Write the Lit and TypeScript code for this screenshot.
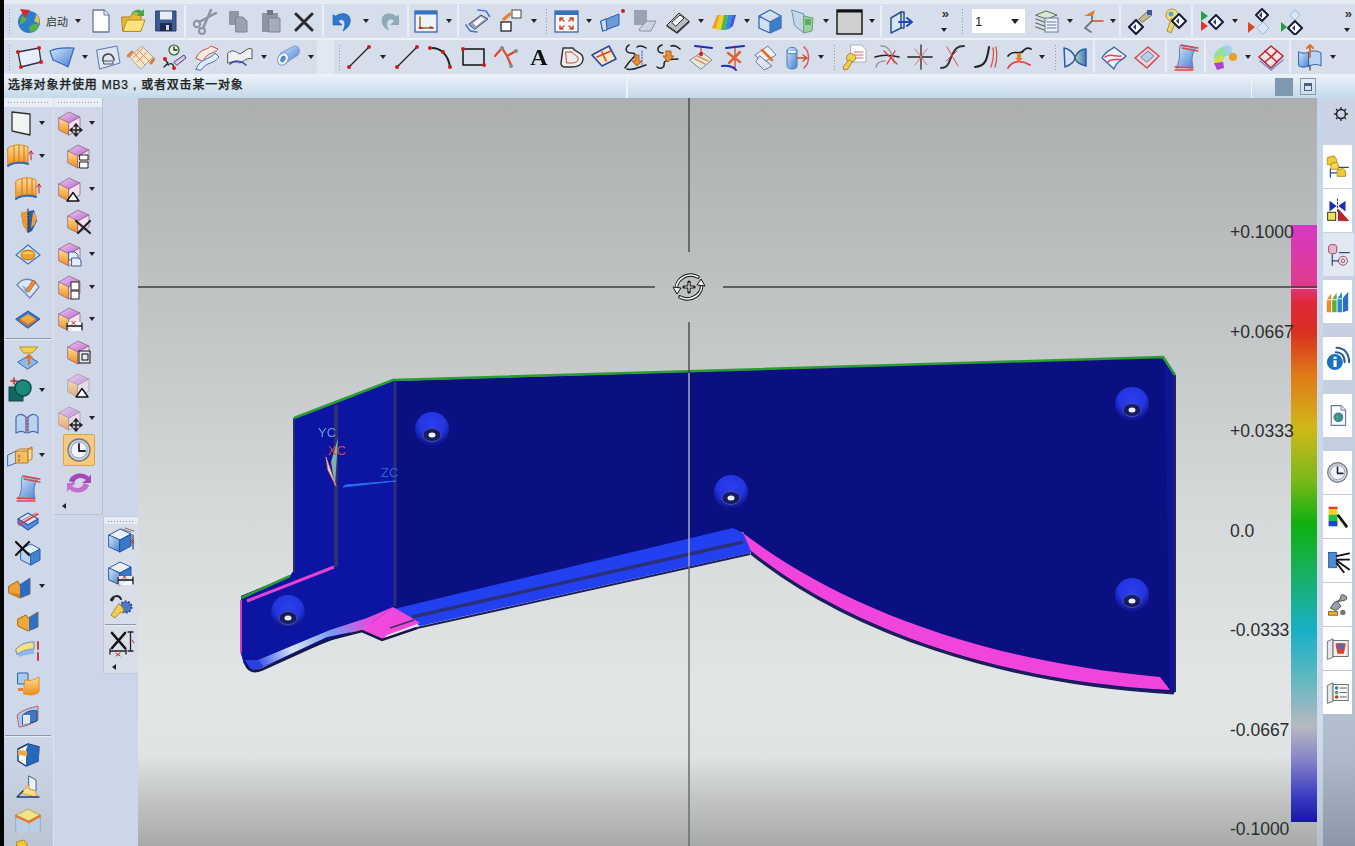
import { LitElement, html, css, svg } from 'lit';
import { customElement } from 'lit/decorators.js';

// cube shapes shared by the feature toolbars
const pcube = (o = 1) => svg`<g opacity=${o} stroke="#8a5a7a" stroke-width=".7">
  <path d="M3 9 13 3 24 8 13 14Z" fill="url(#pu)"/><path d="M3 9 13 14V26L3 21Z" fill="url(#or)"/>
  <path d="M13 14 24 8V20L13 26Z" fill="#f4e0f0"/></g>`;
const bcube = svg`<g stroke="#1c4c98" stroke-width=".9">
  <path d="M2 9 13 3 24 8 13 14Z" fill="#eaf2fc"/><path d="M2 9 13 14V26L2 21Z" fill="url(#bl)"/>
  <path d="M13 14 24 8V20L13 26Z" fill="#3a78c8"/></g>`;
const move = svg`<path d="M20 15V27M14 21H26M20 15 18 17.5M20 15 22 17.5M20 27 18 24.5M20 27 22 24.5M14 21 16.5 19M14 21 16.5 23M26 21 23.5 19M26 21 23.5 23" stroke="#222" stroke-width="1.500"/>`;
const tri = svg`<path d="M17 17.5 23 26H11Z" fill="#fff" stroke="#111" stroke-width="1.400"/>`;
const dim = svg`<rect x="10" y="17" width="17" height="9" fill="#fff" opacity=".85"/><path d="M11 21H26M11 18V25M26 18V25" stroke="#111" stroke-width="1.300"/><path d="M16 16.5 19 19.5M19 16.5 16 19.5" stroke="#b02020"/>`;
const dia = svg`<path d="M3 20 10 13 17 20 10 27Z" fill="#fff" stroke="#141c3c" stroke-width="2.200"/><path d="M10 17 7 20 10 23Z" fill="#2c3c6c"/>`;
const page = (f = '#fff') => svg`<path d="M7 3H18L23 8V25H7Z" fill=${f} stroke="#6d74a8" stroke-width="1.300"/><path d="M18 3V8H23" fill="#e8ecf6" stroke="#6d74a8"/>`;
const redDot = (x: number, y: number) => svg`<circle cx=${x} cy=${y} r="2" fill="#d01c1c"/>`;

const ICONS: Record<string, unknown> = {
  logo: svg`<circle cx="14" cy="15" r="11" fill="#2e7ccc"/><path d="M6 10c4-2 6 0 5 3s-4 3-6 5M15 19c4-3 8-2 9-1-1 4-4 7-8 7-2-2-3-4-1-6Z" fill="#58b048"/><path d="M21 7c3 3 4 6 3 10-2-2-3-2-5-3 1-2 2-4 2-7Z" fill="#f0c030"/><path d="M5 2 15 3 10 11Z" fill="#d82828"/>`,
  new: svg`${page()}`,
  open: svg`<path d="M3 10H11L13 7H22V24H4Z" fill="#e8b830" stroke="#a88018"/><path d="M4 24 8 13H26L22 24Z" fill="#fbe27c" stroke="#b08c20"/><path d="M12 7C15 2 20 2 23 4L25 2V9H18L20 7C18 5 15 5 12 7Z" fill="#4ca83c"/>`,
  save: svg`<path d="M4 4H24V24H4Z" fill="#3d5a96" stroke="#28406e"/><rect x="8" y="4.500" width="12" height="8" fill="#e8eef8"/><rect x="8" y="16" width="12" height="8" fill="#1e2c4c"/><rect x="14" y="18" width="3" height="5" fill="#cfd8e8"/>`,
  cut: svg`<circle cx="6" cy="17" r="3.200" stroke="#8b93a5" stroke-width="2" fill="none"/><circle cx="11" cy="24" r="3" stroke="#8b93a5" stroke-width="2" fill="none"/><path d="M8 15 25 6M12 21 20 3" stroke="#8b93a5" stroke-width="2.500"/>`,
  copy: svg`<path d="M5 4H15V18H5Z" fill="#8e96a8"/><path d="M12 10H19L23 14V25H12Z" fill="#9aa1b2" stroke="#7b8396"/>`,
  paste: svg`<path d="M5 6H21V25H5Z" fill="#8c94a6"/><rect x="10" y="3" width="6" height="5" fill="#6f778a"/><path d="M12 11H23V25H12Z" fill="#a4abb9" stroke="#7b8396"/>`,
  del: svg`<path d="M6 7 22 23M22 7 6 23" stroke="#2c2c30" stroke-width="3"/>`,
  undo: svg`<path d="M7 9C14 4 23 7 21 16 20 20 17 22 14 24 16 19 17 15 14 13 12 12 10 13 9 14L13 18H4V8Z" fill="#2f78cc" stroke="#1c5aa8" stroke-width=".6"/>`,
  redo: svg`<path d="M21 9C14 4 5 7 7 16 8 20 11 22 14 24 12 19 11 15 14 13 16 12 18 13 19 14L15 18H24V8Z" fill="#8fa8bc"/>`,
  wcs: svg`<rect x="3" y="4" width="22" height="21" fill="#eef2fa" stroke="#2c5ca8" stroke-width="1.200"/><rect x="3" y="4" width="22" height="3.500" fill="#3a70c0"/><path d="M8 10V21H20" stroke="#9a6a20" stroke-width="1.500"/><path d="M7 21H10M18 20 21 21" stroke="#c02020" stroke-width="1.500"/>`,
  orient: svg`<path d="M5 17 17 8 24 12 11 22Z" fill="#9aa4b8" stroke="#3c4c78"/><path d="M9 16 17 10 21 12 12 19Z" fill="#fff"/><path d="M2 18 6 24 13 25M14 3 22 4 26 10" stroke="#3c78c8" stroke-width="1.600" stroke-dasharray="2.500 1.500"/>`,
  squares: svg`<rect x="15" y="3" width="9" height="8" fill="#fff" stroke="#444"/><rect x="4" y="15" width="10" height="9" fill="#fff" stroke="#222" stroke-width="1.300"/><path d="M7 12 13 7" stroke="#d88838" stroke-width="3.500"/>`,
  fit: svg`<rect x="3" y="4" width="23" height="21" fill="#f4f6fb" stroke="#2c5ca8" stroke-width="1.200"/><rect x="3" y="4" width="23" height="4" fill="#3a70c0"/><path d="M8 11 12 14M8 11V14M8 11H11M21 11 17 14M21 11V14M21 11H18M8 22 12 19M8 22V19M8 22H11M21 22 17 19M21 22V19M21 22H18" stroke="#d04820" stroke-width="1.500"/>`,
  prism: svg`<path d="M3 14 21 7V18L5 24Z" fill="#6e9ad8" stroke="#2c5ca8"/><path d="M3 14 8 12 9 23 5 24Z" fill="#cbdcf2" stroke="#2c5ca8"/>${redDot(25, 4)}`,
  ghost: svg`<rect x="3" y="3" width="13" height="15" fill="#9aa3b4"/><path d="M9 21 16 14H25L20 24H9Z" fill="#cdd3df" stroke="#8a92a4"/>`,
  scan: svg`<path d="M3 18 15 6 25 14 13 25Z" fill="#b9bcc0" stroke="#333"/><path d="M8 15 16 8 20 11 12 19Z" fill="#fff" stroke="#333"/><path d="M3 19 13 26 25 15" stroke="#333" stroke-width="1.500"/>`,
  rainbow: svg`<path d="M2 21 7 8H10L6 22Z" fill="#f0a020"/><path d="M6 22 10 8H14L11 23Z" fill="#f0d020"/><path d="M11 23 14 8H18L15 23Z" fill="#50b840"/><path d="M15 23 18 8H22L19 22Z" fill="#2090e0"/><path d="M19 22 22 8H26L23 19Z" fill="#4858d8"/>`,
  wire: svg`<path d="M3 9 14 3 25 9V21L14 26 3 21ZM3 9 14 15 25 9M14 15V26" fill="#d2e2f6" stroke="#3468b8" stroke-width="1.300"/><path d="M14 15 25 9V21L14 26Z" fill="#3c7cc8"/>`,
  leaf: svg`<path d="M3 3 15 7V26L6 19Z" fill="#c5d6e8" stroke="#6c92b8"/><path d="M15 9 24 11 23 24 15 26Z" fill="#9fcf9f" stroke="#6c9c8c"/><rect x="16" y="12" width="6" height="6" fill="#58b058"/>`,
  gbox: svg`<rect x="2" y="3" width="25" height="24" fill="#cfcfcf" stroke="#111" stroke-width="1.400"/><rect x="2" y="3" width="25" height="2.500" fill="#111"/>`,
  door: svg`<path d="M4 11 14 5V21L4 26Z" fill="#d8e4f4" stroke="#28508c" stroke-width="1.500"/><path d="M14 5H17V21H14" stroke="#28508c" stroke-width="1.500"/><path d="M12 15H24M20 11 25 15 20 19" stroke="#1c48b8" stroke-width="2"/>`,
  stack: svg`<path d="M3 8 13 4 24 8 14 12Z" fill="#d9e8d4" stroke="#5a6a5a"/><path d="M3 12 14 16 24 12M3 16 14 20 24 16M3 20 14 24 24 20" stroke="#5a6a5a" stroke-width="1.300"/><rect x="12" y="11" width="13" height="14" fill="#eef3fa" stroke="#6a7aa0"/><path d="M14 15H23M14 18H23M14 21H23" stroke="#6a7aa0"/>`,
  axes: svg`<path d="M13 14 6 21 12 25M13 14V6" stroke="#707880" stroke-width="1.800"/><path d="M5 9 16 3 14 9Z" fill="#e07c28"/><path d="M13 14 24 14" stroke="#d84828" stroke-width="1.600"/>`,
  keyd: svg`<path d="M13 12 22 4 26 8 17 15Z" fill="#c8b890" stroke="#807050"/><rect x="21" y="3" width="5" height="5" fill="#3858a8"/>${dia}`,
  keyy: svg`<circle cx="13" cy="8" r="6" fill="#f4e070" stroke="#a89038"/><path d="M12 12 8 24 12 26 17 14Z" fill="#f0d468" stroke="#a89038"/><circle cx="12" cy="7" r="2.500" fill="#58a0d8"/><path d="M13 14 20 7 27 14 20 21Z" fill="#fff" stroke="#141c3c" stroke-width="2"/><path d="M20 11 17 14 20 17Z" fill="#2c3c6c"/>`,
  dia1: svg`<path d="M3 4 10 9 3 14Z" fill="#22a040"/><path d="M3 14 10 19 3 24Z" fill="#d83828"/><path d="M11 15 18 8 25 15 18 22Z" fill="#fff" stroke="#141c3c" stroke-width="2"/><path d="M18 12 15 15 18 18Z" fill="#2c3c6c"/>`,
  dia2: svg`<path d="M12 8 18 2 24 8 18 14Z" fill="#fff" stroke="#141c3c" stroke-width="2"/><path d="M18 5 15 8 18 11Z" fill="#2c3c6c"/><path d="M4 15 11 20 4 26Z" fill="#d84828"/><path d="M13 21 19 15 25 21 19 27Z" fill="#d8e6f8" stroke="#9ab8dc"/>`,
  dia3: svg`<path d="M13 8 18 3 23 8 18 13Z" fill="#d8e6f8" stroke="#9ab8dc"/><path d="M4 15 10 20 4 25Z" fill="#22a040"/><path d="M11 21 18 14 25 21 18 28Z" fill="#fff" stroke="#141c3c" stroke-width="2"/><path d="M18 18 15 21 18 24Z" fill="#2c3c6c"/>`,

  rectpts: svg`<path d="M3 9 24 5 26 19 6 24Z" fill="#e8eefa" stroke="#303050" stroke-width="1.300"/>${redDot(3, 9)}${redDot(24, 5)}${redDot(26, 19)}${redDot(6, 24)}`,
  surf: svg`<path d="M2 8C10 4 18 5 26 5L20 24C15 21 10 19 5 17Z" fill="url(#bl)" stroke="#3468b8" stroke-width="1.200"/>`,
  patch: svg`<path d="M3 7 23 3 26 20 6 26Z" fill="#dbe5f4" stroke="#5a78b0"/><path d="M9 18C7 10 19 8 20 17" stroke="#444" stroke-width="1.600"/><path d="M10 18H19V21H10Z" stroke="#555"/>`,
  grid: svg`<path d="M3 14 15 3 26 14 14 26Z" fill="#f6e4c8" stroke="#a0a8c0"/><path d="M7 10 18 22M11 7 22 18M10 19 21 8M6 15 17 4" stroke="#d89858"/><path d="M1 13 5 9M24 20 27 16" stroke="#e08030" stroke-width="3"/>`,
  clockpts: svg`<circle cx="14" cy="7" r="5" fill="#e4f0e0" stroke="#2c5c2c" stroke-width="1.200"/><path d="M14 4V7H17M4 16 8 20 4 24M8 22C11 19 14 21 14 26" stroke="#222" stroke-width="1.300"/><path d="M14 19 24 12 26 15 17 22Z" fill="#d8c8ec" stroke="#503878"/>${redDot(5, 16)}${redDot(14, 25)}`,
  ribbon: svg`<path d="M3 15C8 4 14 8 18 3L25 6C20 12 15 8 10 18Z" fill="#f6ece4" stroke="#d84848"/><path d="M3 26C8 14 16 18 22 10L26 14C20 22 14 18 8 27Z" fill="#e2ecfa" stroke="#3c70c0"/>`,
  sheet: svg`<path d="M2 10C7 5 11 10 14 11 18 9 22 4 26 6V16C22 14 18 18 14 20 11 19 6 18 2 20Z" fill="#eef0f4" stroke="#555"/><path d="M4 21C9 16 16 18 20 22" stroke="#2848b8" stroke-width="1.500"/>`,
  tube: svg`<path d="M7 10 20 3C25 2 27 8 24 12L12 20Z" fill="url(#bl)" stroke="#7a9ac8"/><ellipse cx="9" cy="16" rx="5" ry="6.500" transform="rotate(30 9 16)" fill="#f4f8fc" stroke="#7a9ac8"/><ellipse cx="9" cy="16" rx="2.500" ry="3.500" transform="rotate(30 9 16)" fill="#5a8ac8"/>`,
  line1: svg`<path d="M4 24 24 4" stroke="#222" stroke-width="1.300"/>${redDot(4, 24)}${redDot(24, 4)}`,
  arc: svg`<path d="M4 5C14 4 22 11 24 24" stroke="#222" stroke-width="2"/>${redDot(4, 5)}${redDot(17, 9)}${redDot(24, 24)}`,
  rect: svg`<rect x="4" y="6" width="21" height="16" fill="none" stroke="#111" stroke-width="1.500"/>${redDot(4, 6)}${redDot(25, 22)}`,
  poly: svg`<path d="M3 13 10 5 15 13 24 8M15 13 19 22" stroke="#e04828" stroke-width="2.200"/><g fill="#8a8a8a"><circle cx="10" cy="5" r="2"/><circle cx="24" cy="8" r="2"/><circle cx="19" cy="23" r="2"/></g>`,
  text: svg`<text x="14" y="22" text-anchor="middle" font-family="Liberation Serif" font-weight="700" font-size="24" fill="#111">A</text>`,
  blob: svg`<path d="M5 5H15C16 9 26 9 25 17 24 23 18 24 13 24H7C4 24 3 22 3 20Z" fill="#f0ecec" stroke="#333" stroke-width="1.500"/><path d="M8 9H14C15 12 21 12 20 17 19 20 15 20 12 20H9Z" stroke="#c04848"/>`,
  band: svg`<path d="M2 12 19 3 26 16 12 23Z" fill="#f6e6c6" stroke="#2848a8" stroke-width="1.600"/><path d="M7 14 21 8M12 9 16 18" stroke="#d84828" stroke-width="1.500"/>`,
  join1: svg`<path d="M7 2C2 5 4 10 9 10S14 12 10 16 5 22 3 25M15 4C18 2 21 3 24 5M5 26C10 28 17 24 24 22" stroke="#222" stroke-width="1.500"/><path d="M20 8V22" stroke="#3858c8" stroke-dasharray="1.500 1.500"/><path d="M13 12H17V18H20L15 23 10 18H13Z" fill="#e89030" stroke="#b06018"/>`,
  join2: svg`<path d="M8 2C2 4 3 10 9 10M17 3C20 2 23 3 26 6M3 24C7 27 11 24 10 20 11 17 17 16 24 16" stroke="#222" stroke-width="1.500"/><path d="M12 8H17V13H20L14 19 9 13H12Z" fill="#e89030" stroke="#b06018"/>`,
  plane1: svg`<path d="M8 3 25 5" stroke="#1c2cb8" stroke-width="2"/><path d="M3 17 15 9 25 17 14 26Z" fill="#e8e8e0" stroke="#7a8a8a"/><path d="M8 16 18 21M10 13 21 18" stroke="#d89858" stroke-width="1.500"/><path d="M14 4V13" stroke="#c82020"/>${redDot(14, 11)}`,
  plane2: svg`<path d="M6 5 24 3M2 23C8 22 14 24 16 27" stroke="#1c2cb8" stroke-width="2"/><path d="M15 3V26" stroke="#c02020"/><path d="M8 10 20 19M20 9 9 20" stroke="#e86028" stroke-width="2.500"/>`,
  planes: svg`<path d="M3 12 16 3 24 12 12 19Z" fill="#eef0f6" stroke="#6a7a9a"/><path d="M8 13 20 23 12 27 4 19Z" fill="#dfe6f2" stroke="#6a7a9a"/><path d="M10 7 20 17" stroke="#e07028" stroke-width="2.500"/>`,
  cyl: svg`<path d="M3 8C3 3 13 3 13 8V23C13 27 3 27 3 23Z" fill="url(#bl)" stroke="#4878b8"/><path d="M3 8C3 12 13 12 13 8" fill="#f0f6fc" stroke="#4878b8"/><path d="M20 4C26 9 26 20 20 25" stroke="#d85858" stroke-width="1.500"/><path d="M13 15H22M19 12 23 15 19 18" stroke="#d84828" stroke-width="1.500"/>`,
  keypage: svg`<path d="M11 2H22L26 7V19H11Z" fill="#fff" stroke="#b0b0c0"/><path d="M14 9H23M14 12H23M14 15H23" stroke="#e06060"/><circle cx="11" cy="15" r="4.500" fill="#f0d050" stroke="#a88828"/><path d="M9 17 3 24 4 27 8 26 12 19Z" fill="#f0d050" stroke="#a88828"/>`,
  trim: svg`<path d="M2 14C8 12 18 12 26 14" stroke="#222" stroke-width="1.500"/><path d="M8 3C14 2 19 8 21 20M3 24C4 20 8 18 12 18" stroke="#999" stroke-width="1.500"/><path d="M11 8 24 21M22 8 14 21" stroke="#e03838" stroke-width="1.300"/>`,
  cross: svg`<path d="M2 14H26" stroke="#222" stroke-width="1.700"/><path d="M15 2V26" stroke="#555" stroke-width="1.700"/><path d="M9 6 21 22M21 6 9 22" stroke="#e07070"/>`,
  bridge: svg`<path d="M2 25C10 25 10 18 13 12S18 3 25 3" stroke="#333" stroke-width="2"/><path d="M8 4 19 23M7 18 18 8" stroke="#d84848"/>`,
  curvered: svg`<path d="M3 24C13 23 15 18 17 4" stroke="#222" stroke-width="2"/><path d="M19 24C21 18 22 10 21 5M23 24C25 18 25 10 24 4" stroke="#d85050" stroke-width="1.300"/>`,
  curves3: svg`<path d="M3 13C9 5 15 14 19 7 21 5 24 5 26 6" stroke="#222" stroke-width="1.700"/><path d="M3 25C8 17 17 17 25 22" stroke="#e04040" stroke-width="1.700"/><path d="M12 10H16V15H18L14 19 10 15H12Z" fill="#e88030"/>`,
  fly: svg`<path d="M3 5C8 6 12 9 14 14 14 18 12 21 4 24Z" fill="#d2e2f4" stroke="#2c5ca8" stroke-width="1.500"/><path d="M25 6C20 6 16 10 14 14 14 18 17 21 25 23Z" fill="url(#gb)" stroke="#2c5ca8" stroke-width="1.500"/>`,
  wave: svg`<path d="M2 15C7 6 11 8 14 4L26 13C21 19 17 17 14 26Z" fill="#f0f2f8" stroke="#3868c0" stroke-width="1.400"/><path d="M5 14C10 10 16 14 21 13M8 19C12 14 17 18 22 16" stroke="#d84868" stroke-width="1.500"/>`,
  wavep: svg`<path d="M2 15 15 4 26 13 14 25Z" fill="#f4d8d8" stroke="#d04858" stroke-width="1.600"/><path d="M8 14 15 8 21 13 14 19Z" fill="#b8cce8" stroke="#6a7ab8"/>`,
  sheetr: svg`<path d="M8 3C6 8 10 14 4 25L21 24C19 16 20 10 24 5Z" fill="url(#bl)" stroke="#5a7ab8"/><path d="M9 2 26 5M10 5 26 8M3 24 21 25M3 27 21 27" stroke="#d84848" stroke-width="1.300"/>`,
  multi: svg`<path d="M3 15C3 7 11 2 20 4L21 12C15 11 12 14 12 19Z" fill="#8ee0a0"/><path d="M12 3C16 2 20 3 20 4L21 12 15 13Z" fill="#a0d0f0"/><circle cx="22" cy="14" r="4" fill="#e8a020"/><path d="M3 20 12 18 13 25 6 27Z" fill="#b040d0"/><path d="M3 15 12 12 12 19 3 20Z" fill="#d0e040"/>`,
  net: svg`<path d="M2 14 14 3 26 13 14 25Z" fill="#fbe4e4" stroke="#c02038" stroke-width="1.600"/><path d="M8 8 20 19M14 14 8 19M14 14 20 8" stroke="#c02038" stroke-width="1.600"/><path d="M3 18 14 27 26 17" stroke="#7a88c8" stroke-width="1.400"/>`,
  cylup: svg`<path d="M3 9C7 11 10 10 13 9V23C10 24 7 25 3 23Z" fill="url(#bl)" stroke="#2c5ca8"/><path d="M13 9C17 7 22 8 25 10V23C22 21 17 21 13 23Z" fill="#b8d4f0" stroke="#2c5ca8"/><path d="M14 2V14M11 5 14 2 17 5" stroke="#e07028" stroke-width="2"/><path d="M14 23V27" stroke="#222"/>`,

  plane: svg`<path d="M6 3 24 5V26L6 22Z" fill="#f2f4f4" stroke="#333" stroke-width="1.300"/>`,
  ext1: svg`<path d="M2 6C7 2 17 2 22 5V21C17 19 7 19 2 24Z" fill="url(#or)" stroke="#d88818"/><path d="M2 24C7 20 17 20 22 22" stroke="#2868c0" stroke-width="2"/><path d="M8 4V21M13 3V20M18 4V20" stroke="#c87818"/><path d="M25 9V18M23 12 25 9 27 12" stroke="#c02020"/>`,
  rev: svg`<path d="M7 6 20 3 23 14 18 24 14 26 9 18Z" fill="#2c5ca8"/><path d="M7 6 14 4V26L9 18Z" fill="#f09830"/><path d="M14 2V26" stroke="#222" stroke-dasharray="2 1.500"/><path d="M19 5 23 9 21 17 17 21Z" fill="#f0a040"/>`,
  hole: svg`<path d="M2 15 14 5 26 15 14 24Z" fill="#dfe9f6" stroke="#4878b8" stroke-width="1.400"/><ellipse cx="14" cy="15" rx="7" ry="5" fill="#f0a028" stroke="#b87010"/><path d="M7 14C11 11 17 11 21 14" fill="#f8c858"/>`,
  pencil: svg`<path d="M3 12C8 5 18 3 25 14L16 25Z" fill="#e0e6f2" stroke="#6888b8" stroke-width="1.300"/><path d="M8 12 15 16 12 22Z" fill="#8abce0"/><path d="M12 17 19 7 22 9 15 19Z" fill="#e89038" stroke="#a05818" stroke-width=".7"/>`,
  shell: svg`<path d="M2 14 14 6 26 14 14 23Z" fill="#3c78c8" stroke="#28508c"/><path d="M6 14 14 9 22 14 14 19Z" fill="#f0a840"/><path d="M6 14 14 19 22 14V16L14 21 6 16Z" fill="#e87828"/>`,
  tbox: svg`<path d="M4 19 14 13 24 19 14 26Z" fill="#8cb8e8" stroke="#3868b0"/><path d="M6 4H24L18 10H10Z" fill="#f0d050" stroke="#b89028"/><path d="M15 12V21M12 15 15 12 18 15" stroke="#e07028" stroke-width="2"/>`,
  shape: svg`<path d="M8 2V8M5 5H11" stroke="#d02020" stroke-width="1.500"/><rect x="3" y="11" width="14" height="14" fill="#106860" stroke="#0c4a44"/><circle cx="17" cy="12" r="8" fill="#1a8a80" stroke="#0c4a44" stroke-width="1.500"/>`,
  ribs: svg`<path d="M2 8C5 4 9 5 12 8V24C9 22 5 22 2 24ZM14 8C17 5 21 4 24 8V24C21 22 17 22 14 24Z" fill="#b8d2f0" stroke="#3c70b8" stroke-width="1.200"/><path d="M12 9H14M12 12H14M12 15H14M12 18H14M12 21H14" stroke="#d03838"/>`,
  bridgeb: svg`<path d="M2 14 10 10V22L2 25Z" fill="#c8dcf4" stroke="#3868b0"/><path d="M10 10H22V22H10Z" fill="#f0c060" stroke="#c07818"/><path d="M22 8V20L26 18V6L22 8ZM10 10 14 8H26" fill="#f8dca0" stroke="#c07818"/><path d="M13 14V20" stroke="#d02020" stroke-dasharray="2 2"/>`,
  cut2: svg`<path d="M4 12 14 6 24 12 14 18Z" fill="#d6e5f7" stroke="#2860b8" stroke-width="1.100"/><path d="M4 12V16L14 23 24 16V12L14 18Z" fill="#5a8ce0" stroke="#2860b8" stroke-width="1.100"/><path d="M5 18 24 7" stroke="#d84040" stroke-width="1.500"/><path d="M5 15 22 6" stroke="#d84040" stroke-width=".8"/>`,
  xcube: svg`<path d="M7 10 17 5 26 10 17 15Z" fill="#e6f0fa" stroke="#2860a8"/><path d="M7 10 17 15V26L7 21Z" fill="#b8d4f0" stroke="#2860a8"/><path d="M17 15 26 10V21L17 26Z" fill="#4484d0" stroke="#2860a8"/><path d="M2 3 15 16M15 3 2 16" stroke="#111" stroke-width="2.200"/>`,
  step: svg`<path d="M3 14 12 9 14 14 24 6V22L14 26 3 21Z" fill="#f0a038" stroke="#a06818"/><path d="M14 12 24 6V22L14 26Z" fill="#2c6cc0"/><path d="M5 21 14 22V26L3 21Z" fill="#d88018"/>`,
  step2: svg`<path d="M4 14 12 10 14 13 24 7V22L14 26 4 21Z" fill="#f0a838" stroke="#a06818"/><path d="M15 13 24 7V22L15 26Z" fill="#3070c0"/>`,
  cap: svg`<path d="M2 12C8 6 14 5 20 5L20 12C14 12 8 14 3 17Z" fill="#f4e080" stroke="#6a88b8"/><path d="M3 17C8 14 14 13 20 13V17C14 17 8 19 5 20Z" fill="#8ab8e8"/><path d="M24 5V12M24 16V23" stroke="#c84040" stroke-width="2"/>`,
  door2: svg`<path d="M4 3H14V14H4Z" fill="#a8ccec" stroke="#2860a8"/><path d="M11 10C16 12 21 9 25 7V22C20 26 15 25 10 24Z" fill="url(#or)" stroke="#d89028"/><path d="M4 18H9V21H4Z" fill="#f08030"/>`,
  frame: svg`<path d="M3 12C8 7 16 5 24 3V17C18 21 10 24 5 24Z" fill="#a8c8ec" stroke="#d05050" stroke-dasharray="2 1"/><path d="M9 12C13 8 18 7 23 8V18L9 22Z" fill="#4478c0" stroke="#204888"/><path d="M9 12H16V20L9 22Z" fill="#dceaf8"/>`,
  drawer: svg`<path d="M4 9 14 4 25 7 24 21 12 26 4 21Z" fill="#f8fafc" stroke="#163c78" stroke-width="1.400"/><path d="M14 4 25 7V21L12 26V10Z" fill="#2868b8"/><path d="M4 10 13 11V16L4 15Z" fill="#f0a838"/>`,
  fold: svg`<path d="M15 3 22 7V18L15 16Z" fill="#eef2f8" stroke="#3868a0"/><path d="M15 16 22 18 22 24 6 20 15 12Z" fill="#f4e08c" stroke="#d8a030"/><path d="M3 24H25M3 24 9 18" stroke="#1c3c78" stroke-width="1.300"/>`,
  top: svg`<path d="M2 9 14 3 26 9 15 15Z" fill="#ece488" stroke="#b8a848"/><path d="M2 9V26M15 15V26M26 9V26" stroke="#8a9ab8"/><path d="M2 12 15 18 26 12V26H2Z" fill="#b8d0ec" opacity=".7"/><path d="M2 10 15 16 26 10" stroke="#e07828" stroke-width="2.400"/>`,

  pmove: svg`${pcube()}${move}`,
  pswap: svg`${pcube()}<path d="M15 13H23V18H15ZM15 20H23V26H15Z" fill="#fff" stroke="#222"/>`,
  ptri: svg`${pcube()}${tri}`,
  pdel: svg`${pcube()}<path d="M11 14 25 26M25 14 13 26" stroke="#222" stroke-width="2.200"/>`,
  pcopy: svg`${pcube()}<path d="M13 12H19L22 15V20H13Z" fill="#e6eefc" stroke="#3c5c9c"/><path d="M16 18H23L25 21V26H16Z" fill="#e6eefc" stroke="#3c5c9c"/>`,
  psq: svg`${pcube()}<rect x="15" y="9" width="8" height="8" fill="#fff" stroke="#222"/><rect x="15" y="18" width="8" height="8" fill="#fff" stroke="#222"/>`,
  pdim: svg`${pcube()}${dim}`,
  psel: svg`${pcube()}<rect x="14" y="13" width="11" height="12" fill="#e4eaf0" stroke="#111"/><rect x="17" y="16" width="6" height="6" fill="none" stroke="#111"/>`,
  ghtri: svg`${pcube(0.55)}${tri}`,
  ghmove: svg`${pcube(0.6)}${move}`,
  clock: svg`<circle cx="14" cy="14" r="11" fill="#c8d0dc" stroke="#707880" stroke-width="1.300"/><circle cx="14" cy="14" r="8" fill="#f4f6fa" stroke="#9aa4b4"/><path d="M14 8V15H20" stroke="#182040" stroke-width="1.800"/>`,
  refresh: svg`<path d="M4 12C6 4 18 2 24 8L26 5V14H17L21 11C17 8 11 8 9 14Z" fill="#a848b8"/><path d="M24 16C22 24 10 26 4 20L2 23V14H11L7 17C11 20 17 20 19 14Z" fill="#c070d0"/>`,
  bedge: svg`${bcube}<path d="M14 3 24 6M18 2 27 5" stroke="#777"/><path d="M26 9V23" stroke="#222"/><path d="M24 14 27 17M27 14 24 17" stroke="#c02020"/>`,
  bdim: svg`${bcube}${dim}`,
  wrench: svg`<circle cx="19" cy="15" r="5.500" fill="#5078c8" stroke="#284888" stroke-width="2" stroke-dasharray="2 1.400"/><path d="M4 8C6 3 12 3 14 7" stroke="#222" stroke-width="2"/><path d="M3 7 8 6 5 10Z" fill="#222"/><path d="M12 12C9 14 8 18 4 23L8 26C11 22 13 20 16 20 18 18 14 13 12 12Z" fill="#f0d050" stroke="#a88828"/>`,
  xdim: svg`<path d="M5 4 18 19M18 4 5 19" stroke="#111" stroke-width="2.600"/><path d="M21 3H26M23.500 3V22M21 22H26M3 22H19M3 20V25M19 20V25" stroke="#222" stroke-width="1.300"/><path d="M9 24 13 27M13 24 9 27M25 11 27 14" stroke="#d02828"/>`,

  tree: svg`<path d="M3 4 10 2 13 6V12H3Z" fill="#f0c838" stroke="#b08818"/><path d="M7 11 13 9 15 12V17H7Z" fill="#f8d850" stroke="#b08818"/><path d="M6 17V26M6 21H13M16 15H26" stroke="#2c4c8c" stroke-width="1.400"/><path d="M14 18 20 16 23 19V25H14Z" fill="#f0c838" stroke="#b08818"/>`,
  asm: svg`<path d="M5 3 13 9 5 15ZM23 3 15 9 23 15Z" fill="#1c2cc0"/><path d="M14 1V15" stroke="#222" stroke-dasharray="2 2"/><rect x="3" y="16" width="9" height="9" fill="#f4e050" stroke="#222"/><path d="M15 25V13L26 25Z" fill="#c82020" stroke="#802020"/>`,
  part: svg`<path d="M3 5C3 2 12 2 12 5V11C12 14 3 14 3 11Z" fill="#e8b8c8" stroke="#903858"/><path d="M7 14V26M7 21H14M15 12H26" stroke="#2c4c8c" stroke-width="1.400"/><circle cx="19" cy="21" r="5" fill="none" stroke="#903858"/><circle cx="19" cy="21" r="2" fill="none" stroke="#903858"/>`,
  books: svg`<path d="M2 12 7 5V26H2Z" fill="#e88c28"/><path d="M8 12 13 4V26H8Z" fill="#58b038"/><path d="M14 11 19 3V26H14Z" fill="#2c84d8"/><path d="M20 10 26 3V24L20 26Z" fill="#2870c0"/><path d="M2 12H7M8 12H13M14 11H19" stroke="#fff"/>`,
  info: svg`<circle cx="11" cy="18" r="9" fill="#1c70c0"/><rect x="9.500" y="16" width="3.500" height="7.500" fill="#fff"/><rect x="9.500" y="12" width="3.500" height="2.500" fill="#fff"/><path d="M12 7C18 7 22 11 22 18M13 2C22 2 27 9 27 18" stroke="#2c5c9c" stroke-width="2.400"/>`,
  globe: svg`${page()}<circle cx="15" cy="16" r="5.500" fill="#3c8a9a"/><path d="M12 13C15 14 16 17 14 20" fill="#58b048"/>`,
  spect: svg`<path d="M4 3H14V6H4Z" fill="#e04020"/><path d="M4 6H14V12H4Z" fill="#f0d020"/><path d="M4 12H14V19H4Z" fill="#20c040"/><path d="M4 19H14V25H4Z" fill="#1848d0"/><path d="M15 13 24 25" stroke="#111" stroke-width="3"/>`,
  coil: svg`<path d="M4 5H13V22H4Z" fill="#4a8cd8" stroke="#244c90" stroke-dasharray="2 1"/><path d="M13 9 27 6M14 13 27 13M13 17 21 27M13 14 27 24" stroke="#111" stroke-width="2"/>`,
  wrench2: svg`<path d="M19 3C24 3 26 7 23 9L14 11 18 16 12 21 6 18 10 12 16 9Z" fill="#9aa0ac" stroke="#444"/><rect x="4" y="22" width="10" height="4" fill="#f0b030" stroke="#806018"/><circle cx="20" cy="23" r="3" fill="#777"/>`,
  book1: svg`<path d="M3 6 9 3V24L3 26Z" fill="#e4e6ea" stroke="#666"/><rect x="9" y="5" width="17" height="18" fill="#f0f0f0" stroke="#666"/><path d="M12 8H23V11L21 20H14L12 11Z" fill="#e04028"/><path d="M15 8H20V15H15Z" fill="#4070c8"/>`,
  book2: svg`<path d="M3 6 9 3V24L3 26Z" fill="#e4e6ea" stroke="#666"/><rect x="9" y="5" width="17" height="18" fill="#f6f6f6" stroke="#666"/><circle cx="13" cy="9" r="2" fill="#3878c8"/><circle cx="13" cy="14" r="2" fill="#48a048"/><circle cx="13" cy="19" r="2" fill="#d03028"/><path d="M17 9H24M17 14H24M17 19H24" stroke="#555"/>`,
};

const ROW1 = [':@8', 'logo', 'start', 'v@11', 'new', 'open', 'save', '|', 'cut', 'copy', 'paste', 'del', '|', 'undo', 'v', 'redo', '|@4', 'wcs', 'v', '|', 'orient', 'squares', 'v', ':', 'fit', 'v', 'prism', 'ghost', 'scan', 'v', 'rainbow', 'v', 'wire', 'leaf', 'v', 'gbox', 'v', '|', 'door', '>@39', ':', 'count', 'stack', 'v', 'axes', 'v@8', '|', 'keyd', 'keyy', '|', 'dia1', 'v', 'dia2', 'dia3', '>'];
const ROW2 = [':@8', 'rectpts', 'surf', 'v', 'patch', 'grid', 'clockpts', 'ribbon', 'sheet', 'v@15', 'tube', 'v', '_@17', ':@8', 'line1', 'v@15', 'line1', 'arc', 'rect', 'poly', 'text', 'blob', 'band@32', 'join1@32', 'join2@32', 'plane1', 'plane2', 'planes@32', 'cyl@32', 'v', ':@10', 'keypage', 'trim', 'cross', 'bridge', 'curvered', 'curves3', 'v', ':@10', 'fly', '|', 'wave', 'wavep', '|', 'sheetr', '|', 'multi', 'v', 'net', '|', 'cylup', 'v'];

// icon name, + for a dropdown, * for the active tool; '-' is a horizontal divider
const DOCK1 = ['plane+', 'ext1+', 'ext1', 'rev', 'hole', 'pencil', 'shell', '-', 'tbox', 'shape+', 'ribs', 'bridgeb+', 'sheetr', 'cut2', 'xcube', 'step+', 'step2', 'cap', 'door2', 'frame', '-', 'drawer', 'fold', 'top', 'tree'];
const DOCK2 = ['pmove+', 'pswap', 'ptri+', 'pdel', 'pcopy+', 'psq+', 'pdim+', 'psel', 'ghtri', 'ghmove+', 'clock*', 'refresh'];
const DOCK3 = ['bedge', 'bdim', 'wrench', '-', 'xdim'];

const RAIL = [['tree', ''], ['asm', ''], ['part', 'sel'], ['books', 'near'], ['info', 'far'], ['globe', 'far'], ['clock', 'far'], ['spect', ''], ['coil', ''], ['wrench2', ''], ['book1', ''], ['book2', '']];
const SCALE = ['+0.1000', '+0.0667', '+0.0333', '0.0', '-0.0333', '-0.0667', '-0.1000'];
const HOLES = [[432, 429], [731, 492], [1132, 404], [1132, 595], [288, 612]];

@customElement('app-root')
export class AppRoot extends LitElement {
  static styles = css`
    :host {
      display: block;
      width: 100%;
      height: 100vh;
      overflow: hidden;
      background: #050505;
      font-family: "Liberation Sans", "Noto Sans CJK SC", sans-serif;
    }
    .app { display: flex; flex-direction: column; height: 846px; padding-left: 4px; box-sizing: border-box; }
    .defs { position: absolute; width: 0; height: 0; }
    .ic { width: 28px; height: 28px; display: block; flex: none; filter: blur(0.35px); }
    .ic path:not([fill]) { fill: none; }
    .ic path { stroke-linecap: round; stroke-linejoin: round; }

    .top-strip { height: 4px; background: #e6ebf3; flex: none; }
    .bar {
      flex: none;
      display: flex;
      align-items: center;
      background: #d7deeb;
      border-bottom: 2px solid #eef1f6;
    }
    .bar.one { height: 34px; }
    .bar.two { height: 34px; border-bottom-width: 1px; }
    .btn { width: 33px; flex: none; display: flex; justify-content: center; }
    .caret-box { width: 13px; flex: none; display: flex; justify-content: center; align-items: center; }
    .caret { width: 0; height: 0; border: 3.5px solid transparent; border-top: 4px solid #222; border-bottom: 0; }
    .sep { width: 6px; flex: none; align-self: stretch; position: relative; }
    .sep::after { content: ""; position: absolute; left: 2px; top: 1px; bottom: 1px; width: 2px; background: #eaeef5; }
    .grip { flex: none; align-self: stretch; position: relative; }
    .grip::after {
      content: "";
      position: absolute;
      right: 1px;
      top: 4px;
      bottom: 4px;
      width: 3px;
      background-image: radial-gradient(#8d96aa 0.9px, transparent 1px);
      background-size: 3px 3px;
    }
    .gap { flex: none; align-self: stretch; background: #e2e7f0; }
    .start { width: 27px; flex: none; font-size: 11px; color: #333; padding-left: 1px; box-sizing: border-box; }
    .more { flex: 1 0 auto; display: flex; flex-direction: column; align-items: flex-end; gap: 10px; padding-right: 3px; font-size: 13px; line-height: 8px; font-weight: 700; color: #333; }
    .more.fixed { flex: none; box-sizing: border-box; padding-right: 7px; }
    .more .caret { margin-right: 2px; }
    .count {
      width: 53px;
      height: 24px;
      box-sizing: border-box;
      flex: none;
      margin: 0 5px 0 7px;
      background: #fff;
      padding: 0 6px 0 3px;
      display: flex;
      align-items: center;
      justify-content: space-between;
      font-size: 13px;
      color: #222;
    }
    .count .caret { border-width: 4px; border-top-width: 5px; border-bottom: 0; }

    .status {
      flex: none;
      height: 23px;
      display: flex;
      background: linear-gradient(#eaf1f8, #c5d9ea);
      font-size: 12px;
      line-height: 21px;
      color: #222;
    }
    .status-text { width: 624px; box-sizing: border-box; padding-left: 4px; border-right: 2px solid #eef3f8; white-space: pre; font-weight: 500; letter-spacing: 0.8px; -webkit-text-stroke: 0.25px #222; }
    .status-fill { flex: 1; border-right: 1px solid #eef3f8; }
    .status-icons { width: 103px; flex: none; display: flex; align-items: center; padding-left: 23px; gap: 7px; box-sizing: border-box; }
    .st-a { width: 18px; height: 18px; background: #7f99b2; }
    .st-b { width: 14px; height: 15px; border: 1px solid #8899a8; display: flex; align-items: center; justify-content: center; }
    .st-b i { width: 8px; height: 8px; border: 1px solid #4c6078; border-top-width: 3px; display: block; box-sizing: border-box; }

    .body { flex: 1; min-height: 0; display: flex; }

    .dock { width: 134px; flex: none; display: flex; background: #ccd6e8; overflow: hidden; }
    .col { display: flex; flex-direction: column; flex: none; }
    .col-head { height: 9px; flex: none; background: #e9edf5; position: relative; }
    .col-head::after {
      content: "";
      position: absolute;
      left: 3px;
      right: 3px;
      top: 3px;
      height: 3px;
      background-image: radial-gradient(#8d96aa 0.9px, transparent 1px);
      background-size: 3px 3px;
    }
    .c1 { width: 49px; border-right: 1px solid #dde3ee; background: linear-gradient(#cfd8e9 85%, #bcc5d4); }
    .c2 { width: 48px; height: 416px; border-right: 1px solid #b9c3d4; border-bottom: 1px solid #b9c3d4; background: #d0d8e8; }
    .c3-wrap { flex: 1; display: flex; flex-direction: column; padding-top: 418px; }
    .c3 { height: 158px; background: #d7dde9; border: 1px solid #c2cad8; border-right: 0; box-sizing: border-box; }
    .c3 .col-head { height: 7px; background: #e6eaf2; }
    .cell { height: 32.7px; flex: none; display: flex; align-items: center; justify-content: center; }
    .cell .caret-box { width: 16px; }
    .c1 .cell { padding-right: 1px; }
    .c2 .cell { padding-left: 1px; }
    .cell.drop { padding-left: 0; }
    .active .hl {
      background: #f6c97c;
      border: 1px solid #dca44c;
      border-radius: 2px;
      padding: 1px;
      display: flex;
    }
    .hr { height: 5px; flex: none; position: relative; }
    .hr::after { content: ""; position: absolute; left: 1px; right: 2px; top: 2px; height: 1px; background: #8e98aa; box-shadow: 0 1px #e8edf5; }
    .back { height: 14px; flex: none; display: flex; padding-left: 8px; align-items: center; }
    .back i { width: 0; height: 0; border: 3.5px solid transparent; border-right: 4px solid #222; border-left: 0; display: block; }

    .view {
      flex: 1;
      min-width: 0;
      position: relative;
      overflow: hidden;
      background: linear-gradient(#acaeaf 0, #c0c3c4 27%, #d6d9d9 55%, #e3e6e6 80%, #e0e3e3 88%, #c6c8c8 93%, #a8aaaa 100%);
    }
    .canvas { position: absolute; inset: 0; width: 100%; height: 100%; filter: blur(0.3px); }
    .colorbar {
      position: absolute;
      right: 0;
      top: 127px;
      width: 26px;
      height: 597px;
      background: linear-gradient(#d838c4 0, #e03a8c 10%, #e02838 13%, #d83020 18%, #e07818 25%, #d0b818 34%, #78b818 43%, #10b010 50%, #18b068 59%, #18b0c8 68%, #60b8c0 76%, #b8b8c0 84%, #8080c8 90%, #3838c0 96%, #1616a4 100%);
    }
    .labels {
      position: absolute;
      left: 1092px;
      top: 124px;
      height: 617px;
      display: flex;
      flex-direction: column;
      justify-content: space-between;
      font-size: 17.5px;
      line-height: 20px;
      color: #2c2e30;
    }

    .strip { width: 6px; flex: none; background: linear-gradient(#c8d5e6 0, #d0dcec 85%, #b6c0cc 100%); }
    .rail {
      width: 32px;
      flex: none;
      display: flex;
      flex-direction: column;
      align-items: flex-start;
      background: linear-gradient(#cad4e4 0, #c0cbdc 70%, #aeb9ca 88%, #8c97aa 100%);
    }
    .gear { height: 47px; flex: none; align-self: stretch; display: flex; justify-content: center; padding-top: 8px; box-sizing: border-box; }
    .gear svg { width: 16px; height: 16px; margin-left: 4px; }
    .card { width: 29px; height: 43px; flex: none; margin-bottom: 1px; background: #fff; display: flex; align-items: center; justify-content: center; }
    .card .ic { width: 25px; height: 25px; }
    .card.sel { background: #e2e8f1; width: 31px; }
    .card.near { margin-top: 3px; }
    .card.far { margin-top: 13px; }
  `;

  private icon(name: string) {
    return html`<svg class="ic" viewBox="0 0 28 28">${ICONS[name]}</svg>`;
  }

  private caret(w?: string) {
    return html`<div class="caret-box" style=${w ? `width:${w}px` : ''}><div class="caret"></div></div>`;
  }

  private tool(token: string) {
    const [name, w] = token.split('@');
    const width = w ? `width:${w}px` : '';
    switch (name) {
      case 'v': return this.caret(w);
      case '|': return html`<div class="sep" style=${width}></div>`;
      case ':': return html`<div class="grip" style=${w ? width : 'width:9px'}></div>`;
      case '_': return html`<div class="gap" style=${width}></div>`;
      case '>': return html`<div class="more ${w ? 'fixed' : ''}" style=${width}><span>»</span><div class="caret"></div></div>`;
      case 'start': return html`<div class="start">启动</div>`;
      case 'count': return html`<div class="count">1<div class="caret"></div></div>`;
      default: return html`<div class="btn" style=${width}>${this.icon(name)}</div>`;
    }
  }

  private cell(token: string) {
    if (token === '-') return html`<div class="hr"></div>`;
    const name = token.replace(/[+*]$/, '');
    const drop = token.endsWith('+');
    if (token.endsWith('*')) {
      return html`<div class="cell active"><div class="hl">${this.icon(name)}</div></div>`;
    }
    return html`<div class="cell ${drop ? 'drop' : ''}">${this.icon(name)}${drop ? this.caret() : ''}</div>`;
  }

  private model() {
    return svg`
      <line x1="138" y1="287" x2="655" y2="287" stroke="#3c3f40" stroke-width="1.300"/>
      <line x1="723" y1="287" x2="1317" y2="287" stroke="#3c3f40" stroke-width="1.300"/>
      <line x1="1291" y1="288.500" x2="1317" y2="288.500" stroke="#f0e0e0" opacity=".7"/>
      <line x1="689" y1="98" x2="689" y2="252" stroke="#3c3f40" stroke-width="1.300"/>

      <!-- bracket body -->
      <path d="M294 418 393 381 1163 357 1175 374V692L1174 693C1000 683 850 632 751 553L743 532 398 610 362 628 263 667 252 671 244 664 241 653V596L290 576 294 570Z" fill="#0a1082"/>
      <path d="M294 418 393 381 395 606 362 628 263 667 252 671 244 664 241 653V596L290 576 294 570Z" fill="#0c14a2"/>
      <path d="M1165 358 1175 374V692L1170 688Z" fill="#0d1696"/>
      <line x1="395" y1="382" x2="395" y2="606" stroke="#2a2f7c" stroke-width="3"/>
      <path d="M336 405V567" stroke="#2e3270" stroke-width="4"/>
      <path d="M294 418V572" stroke="#2a2e70" stroke-width="2"/>
      <path d="M334 567 247 601" stroke="#e044d0" stroke-width="3"/>

      <!-- flange -->
      <path d="M398 608 733 528 743 533 753 548 750 553 420 626 395 609Z" fill="#2340f0"/>
      <path d="M412 617 743 542" stroke="#2a2f7c" stroke-width="3.500"/>
      <path d="M417 628 750 554" stroke="#1c1e58" stroke-width="2"/>
      <path d="M393 607 412 618 420 623 387 635 382 640 362 630Z" fill="#f048dc"/>
      <path d="M390 628 414 620" stroke="#3c3060" stroke-width="1.500"/>
      <path d="M258 660 330 630 367 618 393 607 362 630 327 637 263 667Z" fill="url(#edge)"/>
      <path d="M245 660 258 660 263 667 252 671Z" fill="#2a40e0"/>
      <path d="M246 665C250 673 256 672 263 669L327 640 362 631 382 640 417 628" fill="none" stroke="#141648" stroke-width="2.500"/>

      <!-- curved edge -->
      <path d="M743 533C830 600 970 660 1160 677L1170 690C1000 681 850 630 751 551Z" fill="#f044dc"/>
      <path d="M751 553C850 632 1000 683 1174 693" fill="none" stroke="#1c1e58" stroke-width="3"/>

      <!-- edges -->
      <path d="M1175 375V692" stroke="#22264e" stroke-width="2"/>
      <path d="M294 418 393 380 1163 357 1175 375" fill="none" stroke="#2c9c34" stroke-width="2.500"/>
      <path d="M241 598 290 576" stroke="#2c9c34" stroke-width="2.500"/>
      <path d="M241 600V653" stroke="#d040c0" stroke-width="2"/>

      ${HOLES.map(([x, y]) => svg`
        <circle cx=${x} cy=${y} r="17" fill="url(#dome)"/>
        <ellipse cx=${x} cy=${y + 6} rx="9" ry="6.500" fill="#141c68" stroke="#4a5290" stroke-width="1"/>
        <ellipse cx=${x} cy=${y + 6} rx="3.500" ry="2.500" fill="#eef2f6"/>`)}

      <!-- work coordinate system -->
      <path d="M338 438 335 486 331 462Z" fill="#7cb0a8"/>
      <path d="M326 457 336 486 328 470Z" fill="#f4d8c8" stroke="#e88c70" stroke-width=".8"/>
      <path d="M343 487 396 481 346 485Z" fill="#2c6cf0" stroke="#2c6cf0"/>
      <text x="318" y="437" font-family="Liberation Sans" font-size="13" fill="#6c9cc8">YC</text>
      <text x="328" y="455" font-family="Liberation Sans" font-size="13" fill="#e04c30">XC</text>
      <text x="381" y="477" font-family="Liberation Sans" font-size="13" fill="#3060d8">ZC</text>

      <!-- crosshair over the part -->
      <line x1="689" y1="322" x2="689" y2="373" stroke="#3c3f40" stroke-width="1.300"/>
      <line x1="689" y1="373" x2="689" y2="566" stroke="#a2a8bc" stroke-width="1.500"/>
      <line x1="689" y1="566" x2="689" y2="846" stroke="#6a6c6e" stroke-width="1.500"/>

      <!-- rotate cursor -->
      <g fill="none" stroke-linecap="round">
        <path d="M677 291C674 281 686 271 698 277M701 283C704 293 692 303 680 297" stroke="#111" stroke-width="3.600"/>
        <path d="M677 291C674 281 686 271 698 277M701 283C704 293 692 303 680 297" stroke="#f4f4f4" stroke-width="1.600"/>
        <path d="M689 282V292M684 287H694" stroke="#111" stroke-width="3.200"/>
        <path d="M689 283V291M685 287H693" stroke="#f4f4f4" stroke-width="1.200"/>
      </g>
      <path d="M673 287 681 288 677 294Z" fill="#f4f4f4" stroke="#111"/>
      <path d="M705 286 697 285 701 279Z" fill="#f4f4f4" stroke="#111"/>
    `;
  }

  render() {
    return html`
      <svg class="defs">
        <defs>
          <linearGradient id="or" x1="0" y1="0" x2="0" y2="1"><stop offset="0" stop-color="#ffdc98"/><stop offset="1" stop-color="#f08c14"/></linearGradient>
          <linearGradient id="bl" x1="0" y1="0" x2="1" y2="1"><stop offset="0" stop-color="#d4e6fa"/><stop offset="1" stop-color="#4480d0"/></linearGradient>
          <linearGradient id="pu" x1="0" y1="0" x2="1" y2="1"><stop offset="0" stop-color="#f2c8f2"/><stop offset="1" stop-color="#b468d0"/></linearGradient>
          <linearGradient id="gb" x1="0" y1="0" x2="1" y2="0"><stop offset="0" stop-color="#b8d8a0"/><stop offset="1" stop-color="#3c78c8"/></linearGradient>
          <linearGradient id="edge" gradientUnits="userSpaceOnUse" x1="258" y1="660" x2="393" y2="610"><stop offset="0" stop-color="#3858e8"/><stop offset=".25" stop-color="#d8e4fa"/><stop offset=".55" stop-color="#7898f0"/><stop offset=".8" stop-color="#e050e0"/><stop offset="1" stop-color="#f048dc"/></linearGradient>
          <radialGradient id="dome" cx=".5" cy=".35" r=".65"><stop offset="0" stop-color="#2a40f0"/><stop offset=".6" stop-color="#2434e0"/><stop offset="1" stop-color="#0a1082"/></radialGradient>
        </defs>
      </svg>
      <div class="app">
        <div class="top-strip"></div>
        <div class="bar one">${ROW1.map(t => this.tool(t))}</div>
        <div class="bar two">${ROW2.map(t => this.tool(t))}</div>
        <div class="status">
          <div class="status-text">选择对象并使用 MB3 , 或者双击某一对象</div>
          <div class="status-fill"></div>
          <div class="status-icons"><div class="st-a"></div><div class="st-b"><i></i></div></div>
        </div>
        <div class="body">
          <div class="dock">
            <div class="col c1">
              <div class="col-head"></div>
              ${DOCK1.map(t => this.cell(t))}
            </div>
            <div class="col c2">
              <div class="col-head"></div>
              ${DOCK2.map(t => this.cell(t))}
              <div class="back"><i></i></div>
            </div>
            <div class="c3-wrap">
              <div class="col c3">
                <div class="col-head"></div>
                ${DOCK3.map(t => this.cell(t))}
                <div class="back"><i></i></div>
              </div>
            </div>
          </div>
          <div class="view">
            <div class="colorbar"></div>
            <svg class="canvas" viewBox="138 98 1179 748">${this.model()}</svg>
            <div class="labels">${SCALE.map(s => html`<span>${s}</span>`)}</div>
          </div>
          <div class="strip"></div>
          <div class="rail">
            <div class="gear">
              <svg viewBox="0 0 16 16"><circle cx="8" cy="8" r="4.5" fill="none" stroke="#222" stroke-width="1.500"/><path d="M8 1V3M8 13V15M1 8H3M13 8H15M3 3 4.5 4.5M11.5 11.5 13 13M13 3 11.5 4.5M3 13 4.5 11.5" stroke="#222" stroke-width="1.300"/></svg>
            </div>
            ${RAIL.map(([n, k]) => html`<div class="card ${k}">${this.icon(n)}</div>`)}
          </div>
        </div>
      </div>
    `;
  }
}
